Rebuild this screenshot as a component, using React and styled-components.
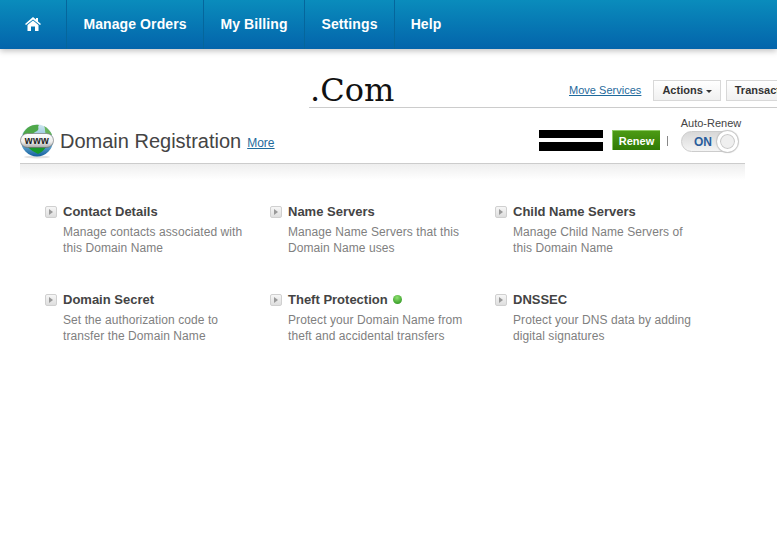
import React from 'react';
import styled, { createGlobalStyle } from 'styled-components';

const GlobalStyle = createGlobalStyle`
  html, body {
    margin: 0;
    padding: 0;
    background: #fff;
  }
  body {
    font-family: "Liberation Sans", Arial, sans-serif;
  }
`;

const Page = styled.div`
  width: 777px;
  height: 557px;
  overflow: hidden;
  background: #fff;
`;

const NavBar = styled.nav`
  display: flex;
  height: 49px;
  background: linear-gradient(#0a8cbc, #0364ab);
  box-shadow: 0 2px 6px rgba(0, 0, 0, 0.25);
`;

const NavItem = styled.a`
  display: flex;
  align-items: center;
  justify-content: center;
  width: ${(props) => props.$width}px;
  padding-bottom: 1px;
  border-right: 1px solid #05669c;
  box-sizing: border-box;
  color: #fff;
  font-size: 14px;
  font-weight: 700;
  letter-spacing: 0.1px;
  &:last-child {
    border-right: none;
  }
`;

const TopRow = styled.div`
  display: flex;
  align-items: center;
  height: 58px;
  margin-left: 309px;
  border-bottom: 1px solid #ccc;
  white-space: nowrap;
  overflow: hidden;
`;

const DomainName = styled.div`
  width: 260px;
  flex: none;
  padding: 24px 0 0 1px;
  font-family: "DejaVu Serif", serif;
  font-size: 32px;
  line-height: 36px;
  color: #111;
  margin-right: -1px;
`;

const ServiceLink = styled.a`
  flex: none;
  margin-top: 24px;
  font-size: 11px;
  letter-spacing: 0.02px;
  color: #1f6a9c;
  text-decoration: underline;
`;

const ActionButton = styled.button`
  flex: none;
  height: 21px;
  margin: 24px 0 0 ${(props) => props.$gap}px;
  padding: 0 8px;
  border: 1px solid #d8d8d8;
  background: linear-gradient(#fff, #f0f0f0);
  color: #333;
  font-family: inherit;
  font-size: 11px;
  font-weight: 700;
  display: flex;
  align-items: center;
  gap: 3px;
`;

const Caret = styled.span`
  width: 0;
  height: 0;
  margin-top: 2px;
  border-left: 3px solid transparent;
  border-right: 3px solid transparent;
  border-top: 3px solid #333;
`;

const DomainHeader = styled.div`
  display: flex;
  align-items: center;
  height: 55px;
  margin: 0 32px 0 20px;
  border-bottom: 1px solid #ccc;
`;

const GlobeBox = styled.div`
  display: flex;
  flex: none;
  margin-top: 10px;
`;

const Title = styled.h1`
  margin: 11px 0 0 6px;
  font-size: 20px;
  line-height: 24px;
  font-weight: 400;
  color: #444;
`;

const MoreLink = styled.a`
  margin: 14px 0 0 6px;
  font-size: 12px;
  color: #1f6a9c;
  text-decoration: underline;
`;

const HeaderRight = styled.div`
  display: flex;
  align-items: center;
  margin-left: auto;
  margin-top: 10px;
`;

const Redacted = styled.div`
  width: 64px;
  height: 21px;
  background: linear-gradient(#000 0 8px, #fff 8px 12px, #000 12px 21px);
`;

const RenewButton = styled.button`
  width: 48px;
  height: 20px;
  margin-left: 9px;
  margin-top: -1px;
  padding: 0;
  border: none;
  border-top: 1px solid #8ccb62;
  border-left: 1px solid #8ccb62;
  background: linear-gradient(#4c9a14, #2f7a05);
  color: #fff;
  font-family: inherit;
  font-size: 11px;
  font-weight: 700;
`;

const Divider = styled.span`
  width: 1px;
  height: 10px;
  margin: 0 13px 0 7px;
  background: #888;
`;

const ToggleBox = styled.div`
  display: flex;
  flex-direction: column;
  align-items: center;
  width: 60px;
  margin-top: -13px;
  margin-right: 4px;
`;

const ToggleLabel = styled.div`
  font-size: 11px;
  line-height: 13px;
  color: #444;
  white-space: nowrap;
`;

const Toggle = styled.div`
  position: relative;
  align-self: flex-start;
  width: 57px;
  height: 21px;
  margin-top: 1px;
  border-radius: 11px;
  border: 1px solid #ccc;
  box-sizing: border-box;
  background: linear-gradient(#d8d8d8, #f4f4f4);
  color: #2a5d9c;
  font-size: 12px;
  font-weight: 700;
  line-height: 20px;
  padding-left: 12px;
`;

const ToggleKnob = styled.span`
  position: absolute;
  right: -1px;
  top: -1px;
  width: 21px;
  height: 21px;
  box-sizing: border-box;
  border-radius: 50%;
  border: 3px solid #fff;
  background: #efefef;
  box-shadow: 0 0 1px 1px #c4c4c4, inset 0 0 0 1px #c8c8c8;
`;

const HeaderFade = styled.div`
  height: 16px;
  margin: 0 32px 0 20px;
  background: linear-gradient(#eee, #fff);
`;

const FeatureGrid = styled.div`
  display: grid;
  grid-template-columns: repeat(3, 225px);
  grid-auto-rows: 88px;
  padding: 24px 0 0 45px;
`;

const Feature = styled.div`
  display: grid;
  grid-template-columns: 18px 186px;
  grid-template-rows: auto auto;
  align-content: start;
`;

const FeatureIcon = styled.span`
  display: flex;
  align-items: center;
  justify-content: center;
  width: 12px;
  height: 12px;
  margin-top: 2px;
  box-sizing: border-box;
  border: 1px solid #d0d0d0;
  border-radius: 2px;
  background: linear-gradient(#f6f6f6, #dedede);
  &::after {
    content: '';
    border-left: 4px solid #999;
    border-top: 3px solid transparent;
    border-bottom: 3px solid transparent;
  }
`;

const FeatureTitle = styled.div`
  display: flex;
  align-items: center;
  gap: 5px;
  font-size: 13px;
  line-height: 15px;
  font-weight: 700;
  color: #444;
`;

const StatusDot = styled.span`
  width: 9px;
  height: 9px;
  border-radius: 50%;
  background: radial-gradient(circle at 45% 30%, #8fe070, #1f8a14);
`;

const FeatureText = styled.div`
  grid-column: 2;
  margin-top: 5px;
  font-size: 12px;
  line-height: 16px;
  letter-spacing: 0.08px;
  color: #808080;
`;

function HomeIcon() {
  return (
    <svg width="16" height="14" viewBox="0 0 16 14" fill="#fff">
      <path d="M8 0 L0 7 L1 8 L8 2.500 L15 8 L16 7 L13 4.400 V1 H11 V2.600 Z" />
      <path d="M2.500 8 L8 3.600 L13.500 8 V14 H10 V9.500 H6 V14 H2.500 Z" />
    </svg>
  );
}

function GlobeIcon() {
  return (
    <svg width="34" height="36" viewBox="0 0 34 36">
      <defs>
        <linearGradient id="sky" x1="0" y1="0" x2="0" y2="1">
          <stop offset="0" stopColor="#cfe6ee" />
          <stop offset="0.6" stopColor="#6fb0d8" />
          <stop offset="1" stopColor="#135f9e" />
        </linearGradient>
        <linearGradient id="band" x1="0" y1="0" x2="0" y2="1">
          <stop offset="0" stopColor="#fff" />
          <stop offset="0.6" stopColor="#eee" />
          <stop offset="1" stopColor="#a8a8a8" />
        </linearGradient>
      </defs>
      <ellipse cx="17" cy="34" rx="13" ry="1.500" fill="#e2e2e2" />
      <circle cx="17" cy="17.500" r="16" fill="url(#sky)" />
      <path d="M3 11 C6 4 13 1 19 2 C17 4 20 6 17 8 C14 9 13 11 12 12 L3 12 Z" fill="#4fa84a" />
      <path d="M24 3 C28 5 31 9 32 12 L27 12 C24 10 26 6 24 3 Z" fill="#67b45c" />
      <path d="M8 24 H26 C24 27 22 29 18 31 C15 29 10 27 8 24 Z" fill="#169a2a" />
      <rect x="0.500" y="10.500" width="33" height="14" rx="7" fill="url(#band)" stroke="#666" strokeWidth="0.600" />
      <text x="17" y="21" textAnchor="middle" fontFamily="Liberation Sans, sans-serif" fontSize="10" fontWeight="700" letterSpacing="0.400" fill="#222">www</text>
    </svg>
  );
}

const features = [
  { title: 'Contact Details', text: 'Manage contacts associated with this Domain Name' },
  { title: 'Name Servers', text: 'Manage Name Servers that this Domain Name uses' },
  { title: 'Child Name Servers', text: 'Manage Child Name Servers of this Domain Name' },
  { title: 'Domain Secret', text: 'Set the authorization code to transfer the Domain Name' },
  { title: 'Theft Protection', text: 'Protect your Domain Name from theft and accidental transfers', active: true },
  { title: 'DNSSEC', text: 'Protect your DNS data by adding digital signatures' },
];

export default function App() {
  return (
    <Page>
      <GlobalStyle />
      <NavBar>
        <NavItem $width={67}><HomeIcon /></NavItem>
        <NavItem $width={137}>Manage Orders</NavItem>
        <NavItem $width={101}>My Billing</NavItem>
        <NavItem $width={90}>Settings</NavItem>
        <NavItem $width={62}>Help</NavItem>
      </NavBar>
      <TopRow>
        <DomainName>.Com</DomainName>
        <ServiceLink>Move Services</ServiceLink>
        <ActionButton $gap={12}>Actions <Caret /></ActionButton>
        <ActionButton $gap={5}>Transactions</ActionButton>
      </TopRow>
      <DomainHeader>
        <GlobeBox><GlobeIcon /></GlobeBox>
        <Title>Domain Registration</Title>
        <MoreLink>More</MoreLink>
        <HeaderRight>
          <Redacted />
          <RenewButton>Renew</RenewButton>
          <Divider />
          <ToggleBox>
            <ToggleLabel>Auto-Renew</ToggleLabel>
            <Toggle>ON<ToggleKnob /></Toggle>
          </ToggleBox>
        </HeaderRight>
      </DomainHeader>
      <HeaderFade />
      <FeatureGrid>
        {features.map((feature) => (
          <Feature key={feature.title}>
            <FeatureIcon />
            <FeatureTitle>
              {feature.title}
              {feature.active && <StatusDot />}
            </FeatureTitle>
            <FeatureText>{feature.text}</FeatureText>
          </Feature>
        ))}
      </FeatureGrid>
    </Page>
  );
}
